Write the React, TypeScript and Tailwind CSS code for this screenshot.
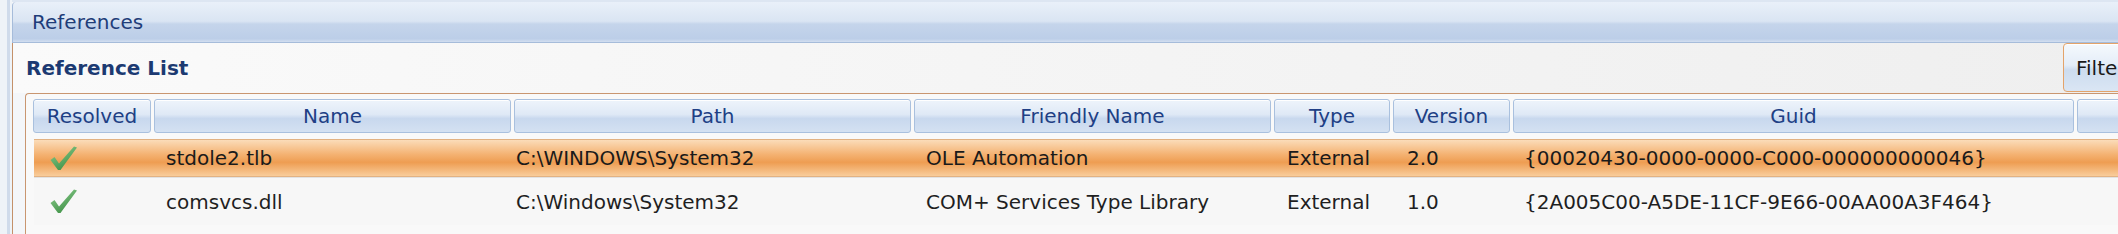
import React from "react";

const cols = [
  { key: "resolved", title: "Resolved", w: "w-[118px]", pl: "pl-[16px]" },
  { key: "name", title: "Name", w: "w-[357px]", pl: "pl-[12px]" },
  { key: "path", title: "Path", w: "w-[397px]", pl: "pl-[2px]" },
  { key: "friendly", title: "Friendly Name", w: "w-[357px]", pl: "pl-[12px]" },
  { key: "type", title: "Type", w: "w-[116px]", pl: "pl-[13px]" },
  { key: "version", title: "Version", w: "w-[117px]", pl: "pl-[14px]" },
  { key: "guid", title: "Guid", w: "w-[561px]", pl: "pl-[11px]" },
  { key: "extra", title: "", w: "w-[200px]", pl: "pl-[10px]" },
];

const rows = [
  {
    name: "stdole2.tlb",
    path: "C:\\WINDOWS\\System32",
    friendly: "OLE Automation",
    type: "External",
    version: "2.0",
    guid: "{00020430-0000-0000-C000-000000000046}",
    selected: true,
  },
  {
    name: "comsvcs.dll",
    path: "C:\\Windows\\System32",
    friendly: "COM+ Services Type Library",
    type: "External",
    version: "1.0",
    guid: "{2A005C00-A5DE-11CF-9E66-00AA00A3F464}",
    selected: false,
  },
];

function Check({ id }: { id: string }) {
  return (
    <svg width="28" height="25" viewBox="0 0 28 25">
      <defs>
        <linearGradient id={id} x1="0" y1="0" x2="0.6" y2="1">
          <stop offset="0" stopColor="#92cf92" />
          <stop offset="1" stopColor="#3f9247" />
        </linearGradient>
      </defs>
      <path d="M0.5 14 L4.5 11 L9 17.5 L24 0.5 L27 1.5 L10.5 24 L8 24 Z" fill={`url(#${id})`} />
    </svg>
  );
}

export default function App() {
  return (
    <div className="w-[2118px] h-[234px] overflow-hidden flex bg-[#f4f6f9] font-['DejaVu_Sans',sans-serif] text-[20px]">
      <div className="w-[12px] shrink-0 bg-[#eef3f8] flex justify-end">
        <div className="w-[3px] mr-[2px] bg-[#cfdbeb]" />
      </div>
      <div className="flex-1 min-w-0 flex flex-col">
        <div className="h-[2px] shrink-0 bg-[#dde6f2]" />
        <div className="h-[41px] shrink-0 rounded-tl-[4px] border-l border-b border-[#a6bcda] bg-[linear-gradient(to_bottom,#e9f0f9_0%,#dae5f3_48%,#c5d5eb_55%,#bccee8_92%,#d3dff0_100%)] flex items-center pl-[19px] text-[#1f3d79] leading-none">
          References
        </div>
        <div className="flex-1 flex flex-col border-l border-[#c4916a] min-h-0">
          <div className="h-[50px] shrink-0 flex items-start bg-[linear-gradient(to_right,#fafafa,#efefef)]">
            <div className="h-[49px] flex items-center pl-[13px] font-bold text-[#1c3a72]">
              Reference List
            </div>
            <div className="flex-1" />
            <div className="w-[100px] h-[49px] shrink-0 mr-[-45px] rounded-[4px] border border-[#e3a36a] bg-[linear-gradient(to_bottom,#f5f9fd_0%,#e4edf8_45%,#cddcef_55%,#dae6f4_100%)] shadow-[inset_0_1px_0_#ffffff] flex items-center pl-[12px] text-[#1a1a1a]">
              Filter
            </div>
          </div>
          <div className="flex-1 ml-[12px] border-l border-t border-[#c99670] rounded-tl-[4px] bg-[#f9f9f9] pl-[7px] pt-[5px] overflow-hidden">
            <div className="flex gap-[3px] h-[34px]">
              {cols.map((c) => (
                <div
                  key={c.key}
                  className={`${c.w} shrink-0 h-[34px] rounded-[3px] border border-[#a9c0de] bg-[linear-gradient(to_bottom,#eef4fb_0%,#dfe9f6_45%,#c8d8ee_58%,#d4e1f2_100%)] shadow-[inset_0_1px_0_#ffffff] flex items-center justify-center text-[#203f85]`}
                >
                  {c.title}
                </div>
              ))}
            </div>
            <div className="mt-[6px] ml-[1px] flex flex-col">
              {rows.map((r, i) => (
                <div
                  key={r.name}
                  className={
                    r.selected
                      ? "h-[38px] flex items-center border-t border-b border-[#e2b283] bg-[linear-gradient(to_bottom,#fbdcb9_0%,#f4b272_40%,#ee9d52_62%,#f9cd9b_100%)] text-[#1a1a1a]"
                      : "h-[48px] flex items-center border-t border-[#e2e2e2] bg-[#f7f7f7] text-[#1f1f1f]"
                  }
                >
                  {cols.map((c, ci) => {
                    const w = ci === 0 ? "w-[117px]" : c.w;
                    let content: React.ReactNode = null;
                    if (c.key === "resolved") content = <Check id={`chk${i}`} />;
                    else if (c.key !== "extra") content = (r as Record<string, unknown>)[c.key] as string;
                    return (
                      <div
                        key={c.key}
                        className={`${w} ${c.pl} shrink-0 whitespace-nowrap flex items-center ${ci > 0 ? "ml-[3px]" : ""}`}
                      >
                        {content}
                      </div>
                    );
                  })}
                </div>
              ))}
            </div>
          </div>
        </div>
      </div>
    </div>
  );
}
